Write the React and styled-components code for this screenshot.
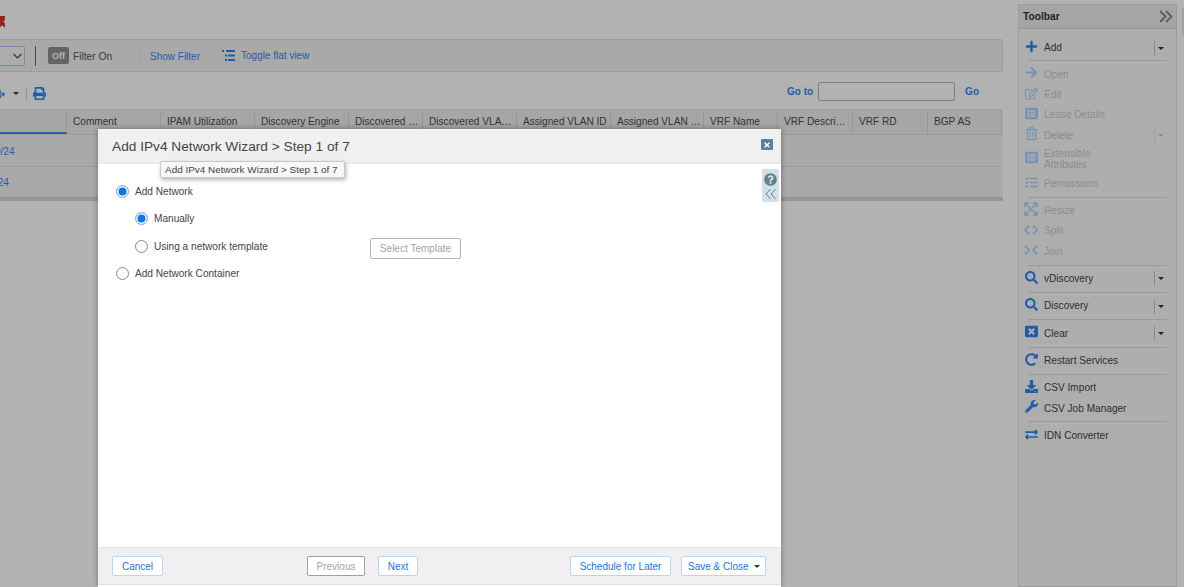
import React from 'react';
import styled, { createGlobalStyle } from 'styled-components';
import {
  FaPlus, FaArrowRight, FaRegEdit, FaListAlt, FaRegTrashAlt, FaTasks,
  FaSearch, FaWindowClose, FaRedoAlt, FaDownload, FaWrench, FaExchangeAlt, FaPrint,
  FaQuestionCircle, FaTimes, FaFileExport,
} from 'react-icons/fa';

const LINK = '#2f86f0';

const Global = createGlobalStyle`
  html, body { margin: 0; padding: 0; background: #fff; }
  #root { width: 1184px; height: 587px; overflow: hidden; }
  * { box-sizing: border-box; }
`;

const Page = styled.div`
  position: relative;
  width: 1184px;
  height: 587px;
  overflow: hidden;
  display: flex;
  background: #ffffff;
  font-family: "Liberation Sans", Arial, sans-serif;
  color: #444;
`;
const Main = styled.main`
  width: 1018px;
  flex: none;
  display: flex;
  flex-direction: column;
`;
const TopBar = styled.div`
  height: 39px;
  display: flex;
  align-items: flex-start;
  padding-top: 16px;
`;
const FilterBar = styled.div`
  width: 1003px;
  height: 33px;
  background: #f3f3f3;
  border: 1px solid #e0e0e0;
  border-left: 0;
  border-radius: 0 3px 3px 0;
  display: flex;
  align-items: center;
`;
const ClippedSelect = styled.div`
  width: 25px;
  height: 20px;
  background: #f8f8f8;
  border: 1px solid #a9c8ee;
  border-left: 0;
  border-radius: 0 2px 2px 0;
  display: flex;
  align-items: center;
  justify-content: flex-end;
  padding-right: 2px;
  color: #444;
`;
const VRule = styled.span`
  width: 1px;
  height: ${p => p.$h}px;
  background: ${p => p.$c};
  margin: 0 ${p => p.$r}px 0 ${p => p.$l}px;
  flex: none;
`;
const OffBadge = styled.span`
  width: 21px;
  height: 17px;
  background: #909090;
  color: #ffffff;
  border-radius: 2px;
  font-size: 9px;
  font-weight: 700;
  display: flex;
  align-items: center;
  justify-content: center;
`;
const FilterLabel = styled.span`
  font-size: 10.2px;
  color: #555;
  margin: 1px 0 0 4px;
  width: 67px;
`;
const BlueLink = styled.a`
  font-size: 10px;
  color: ${LINK};
  display: inline-flex;
  align-items: center;
  gap: 6px;
  font-weight: ${p => (p.$bold ? 700 : 400)};
`;
const FilterLink = styled(BlueLink)`
  margin-top: 1px;
`;
const FlatLink = styled(BlueLink)`
  margin-left: 22px;
  margin-top: -1px;
`;
const ActionRow = styled.div`
  height: 37px;
  width: 1003px;
  padding-top: 5px;
  display: flex;
  align-items: center;
  color: ${LINK};
`;
const Caret = styled.span`
  width: 0;
  height: 0;
  flex: none;
  border-left: 3px solid transparent;
  border-right: 3px solid transparent;
  border-top: 3.5px solid ${p => p.$c || '#333'};
`;
const ExportGap = styled.span`
  width: 8px;
  flex: none;
`;
const ExportIcon = styled(FaFileExport)`
  margin-left: -7px;
  flex: none;
`;
const GoGroup = styled.div`
  margin-left: auto;
  padding-right: 24px;
  display: flex;
  align-items: center;
  margin-top: -3px;
`;
const GoInput = styled.input`
  width: 137px;
  height: 19px;
  margin: 0 10px 0 5px;
  background: #fff;
  border: 1px solid #b4b4b4;
  border-radius: 2px;
  padding: 0;
`;
const Table = styled.div`
  width: 1003px;
  display: flex;
  flex-direction: column;
`;
const HeadRow = styled.div`
  height: 25px;
  display: flex;
  background: #eeeeee;
  border-top: 1px solid #e6e6e6;
`;
const HeadCell = styled.div`
  flex: none;
  width: ${p => p.$w}px;
  height: 100%;
  border-right: 1px solid #d8d8d8;
  border-bottom: ${p => (p.$active ? `2px solid ${LINK}` : '0')};
  padding: 6px 0 0 6px;
  font-size: 10.1px;
  color: #4a4a4a;
  white-space: nowrap;
  overflow: hidden;
`;
const BodyRow = styled.div`
  height: 31.5px;
  padding-top: 2px;
  background: #f3f3f3;
  border-top: 1px solid #dfdfdf;
  display: flex;
  align-items: center;
  font-size: 10px;
  color: ${LINK};
`;
const RowLink = styled.a`
  margin-left: -5px;
`;
const ScrollLine = styled.div`
  height: 4px;
  background: #d6d6d6;
`;
const ToolPanel = styled.aside`
  width: 159px;
  margin-top: 4px;
  background: #fafafa;
  border: 1px solid #e0e0e0;
  display: flex;
  flex-direction: column;
  flex: none;
`;
const ToolHead = styled.div`
  height: 24px;
  flex: none;
  background: #ececec;
  border-bottom: 1px solid #dcdcdc;
  display: flex;
  align-items: center;
  justify-content: space-between;
  padding: 0 3px 0 4px;
  font-size: 10.2px;
  font-weight: 700;
  color: #333;
`;
const ToolSection = styled.div`
  margin: 0 9px;
  padding: ${p => (p.$first ? '9px 0 2px' : '3px 0')};
  border-bottom: ${p => (p.$last ? 0 : '1px solid #dcdcdc')};
`;
const ToolRow = styled.div`
  min-height: ${p => (p.$tall ? 28 : 20.3)}px;
  margin: 0 -3px 0 -4px;
  display: flex;
  align-items: center;
  font-size: 10.1px;
  line-height: 11.5px;
  color: ${p => (p.$off ? '#c9c9c9' : '#444')};
`;
const ToolIcon = styled.span`
  width: 14px;
  flex: none;
  margin-right: 6px;
  display: flex;
  justify-content: center;
  color: ${p => (p.$off ? '#aed0ff' : LINK)};
  margin-top: -3px;
  font-size: 13px;
`;
const ToolText = styled.span`
  flex: 1;
`;
const Split = styled.span`
  width: 13px;
  height: 15px;
  border-left: 1px solid ${p => (p.$off ? '#e4e4e4' : '#c8c8c8')};
  flex: none;
  display: flex;
  align-items: center;
  padding-left: 3px;
  margin-right: 3px;
`;
const ScrollStub = styled.div`
  width: 2px;
  height: 28px;
  margin: 8px 0 0 5px;
  background: #e8e8e8;
  flex: none;
`;
const Overlay = styled.div`
  position: absolute;
  inset: 0;
  background: rgba(0, 0, 0, 0.3);
`;
const Modal = styled.section`
  position: absolute;
  left: 98px;
  top: 129px;
  width: 683px;
  height: 458px;
  background: #fff;
  display: flex;
  flex-direction: column;
  box-shadow: 0 0 6px rgba(0, 0, 0, 0.35);
`;
const ModalHead = styled.header`
  height: 35px;
  flex: none;
  background: #f0f0f0;
  border-bottom: 1px solid #e6e6e6;
  display: flex;
  align-items: center;
  justify-content: space-between;
  padding: 0 8px 0 14px;
  font-size: 13.7px;
  color: #444;
`;
const CloseBtn = styled.span`
  width: 12px;
  height: 11px;
  background: #5f7f93;
  color: #fff;
  border-radius: 1px;
  font-size: 8px;
  display: flex;
  align-items: center;
  justify-content: center;
  margin-top: -3px;
`;
const Tip = styled.div`
  position: absolute;
  left: 62px;
  top: 32px;
  width: 185px;
  height: 17px;
  padding: 0 4px;
  background: #f7f7f7;
  border: 1px solid #c8c8c8;
  border-radius: 2px;
  box-shadow: 1px 2px 4px rgba(0, 0, 0, 0.3);
  font-size: 9.95px;
  line-height: 15px;
  color: #444;
  white-space: nowrap;
`;
const SideTab = styled.div`
  position: absolute;
  right: 2px;
  top: 40px;
  width: 17px;
  height: 33px;
  background: #d3e0e5;
  border-radius: 2px;
  display: flex;
  flex-direction: column;
  align-items: center;
  justify-content: space-around;
  color: #5f7f93;
  padding: 3px 0 1px;
`;
const ModalBody = styled.div`
  flex: 1;
  padding: 20px 18px 0;
  display: flex;
  flex-direction: column;
  gap: 13.5px;
`;
const RadioLine = styled.label`
  height: 14px;
  display: flex;
  align-items: center;
  font-size: 10.1px;
  color: #444;
  margin-left: ${p => (p.$nested ? 19 : 0)}px;
`;
const Radio = styled.input.attrs({ type: 'radio' })`
  appearance: none;
  width: 13px;
  height: 13px;
  margin: 0 6px 0 0;
  flex: none;
  border-radius: 50%;
  background: #fff;
  border: 1px solid ${p => (p.checked ? '#6aa9f5' : '#8a8a8a')};
  box-shadow: ${p => (p.checked ? 'inset 0 0 0 1.5px #fff, inset 0 0 0 7px #0f72ee' : 'none')};
`;
const RadioText = styled.span`
  width: ${p => p.$w || 'auto'};
`;
const GhostBtn = styled.button`
  width: 91px;
  height: 21px;
  margin-top: 4px;
  background: #fff;
  border: 1px solid #b4b4b4;
  border-radius: 2px;
  font: 10.05px "Liberation Sans", Arial, sans-serif;
  color: #a3a3a3;
  padding: 0;
`;
const ModalFoot = styled.footer`
  height: 38px;
  flex: none;
  background: #f0f0f0;
  border-top: 1px solid #e6e6e6;
  border-bottom: 1px solid #e0e0e0;
  display: flex;
  align-items: center;
  justify-content: space-between;
  padding: 0 15px 0 14px;
  margin-bottom: 2px;
`;
const BtnGroup = styled.div`
  display: flex;
  gap: ${p => p.$gap}px;
  margin-right: ${p => p.$mr || 0}px;
`;
const FootBtn = styled.button`
  width: ${p => p.$w}px;
  height: 20px;
  background: #fff;
  border: 1px solid ${p => (p.disabled ? '#a0a0a0' : '#b7d5fb')};
  border-radius: 2px;
  font: 10px "Liberation Sans", Arial, sans-serif;
  color: ${p => (p.disabled ? '#a3a3a3' : '#1a75e8')};
  padding: ${p => (p.$caret ? '0 5px 0 6px' : 0)};
  display: flex;
  align-items: center;
  justify-content: ${p => (p.$caret ? 'space-between' : 'center')};
`;

const columns = [
  ['', 67, true], ['Comment', 94], ['IPAM Utilization', 94], ['Discovery Engine', 94],
  ['Discovered …', 74], ['Discovered VLA…', 94], ['Assigned VLAN ID', 94], ['Assigned VLAN …', 93],
  ['VRF Name', 74], ['VRF Descri…', 75], ['VRF RD', 75], ['BGP AS', 74],
];

const Stroke = ({ d, w = 14, h = 12, sw = 1.8, c = 'currentColor' }) => (
  <svg width={w} height={h} viewBox={`0 0 ${w} ${h}`} fill="none" stroke={c} strokeWidth={sw}>
    <path d={d} />
  </svg>
);
const JoinIcon = () => <Stroke d="M1 1.500l4 4.500-4 4.500M13 1.500L9 6l4 4.500" />;
const SplitIcon = () => <Stroke d="M5 1.500L1 6l4 4.500M9 1.500l4 4.500-4 4.500" />;
const ResizeIcon = () => (
  <svg width="14" height="14" viewBox="0 0 14 14" fill="none" stroke="currentColor" strokeWidth="1.5">
    <path d="M1 5V1h4M9 1h4v4M13 9v4H9M5 13H1V9M2 2l10 10M12 2L2 12" />
  </svg>
);

const groups = [
  [{ t: 'Add', i: <FaPlus />, drop: true }],
  [
    { t: 'Open', i: <FaArrowRight />, off: true },
    { t: 'Edit', i: <FaRegEdit />, off: true },
    { t: 'Lease Details', i: <FaListAlt />, off: true },
    { t: 'Delete', i: <FaRegTrashAlt />, off: true, drop: true },
    { t: <>Extensible<br />Attributes</>, i: <FaListAlt />, off: true, tall: true },
    { t: 'Permissions', i: <FaTasks />, off: true },
  ],
  [
    { t: 'Resize', i: <ResizeIcon />, off: true },
    { t: 'Split', i: <SplitIcon />, off: true },
    { t: 'Join', i: <JoinIcon />, off: true },
  ],
  [{ t: 'vDiscovery', i: <FaSearch />, drop: true }],
  [{ t: 'Discovery', i: <FaSearch />, drop: true }],
  [{ t: 'Clear', i: <FaWindowClose />, drop: true }],
  [{ t: 'Restart Services', i: <FaRedoAlt /> }],
  [{ t: 'CSV Import', i: <FaDownload /> }, { t: 'CSV Job Manager', i: <FaWrench /> }],
  [{ t: 'IDN Converter', i: <FaExchangeAlt /> }],
];

export default function App() {
  return (
    <Page>
      <Global />
      <Main>
        <TopBar>
          <svg width="5" height="12" viewBox="0 0 5 12"><path d="M0 0h5v4L3.500 5.500 5 7.500V12L2.500 9.500 0 11z" fill="#d8323a" /></svg>
        </TopBar>
        <FilterBar>
          <ClippedSelect><Stroke d="M.5 1l4 4 4-4" w={9} h={6} sw={1.1} /></ClippedSelect>
          <VRule $h={20} $c="#666" $l={10} $r={12} />
          <OffBadge>Off</OffBadge>
          <FilterLabel>Filter On</FilterLabel>
          <VRule $h={16} $c="#e2e2e2" $l={0} $r={9} />
          <FilterLink>Show Filter</FilterLink>
          <FlatLink>
            <svg width="13" height="11" viewBox="0 0 13 11" fill="currentColor">
              <path d="M0 0h2v2H0zM4 0h9v2H4zM3 4.500h2v2H3zM6 4.500h7v2H6zM3 9h2v2H3zM6 9h7v2H6z" />
            </svg>
            Toggle flat view
          </FlatLink>
        </FilterBar>
        <ActionRow>
          <ExportIcon size={12} />
          <ExportGap />
          <Caret />
          <VRule $h={13} $c="#d0d0d0" $l={7} $r={6} />
          <FaPrint size={13} />
          <GoGroup>
            <BlueLink $bold>Go to</BlueLink>
            <GoInput />
            <BlueLink $bold>Go</BlueLink>
          </GoGroup>
        </ActionRow>
        <Table>
          <HeadRow>
            {columns.map(([t, w, a], i) => <HeadCell key={i} $w={w} $active={a}>{t}</HeadCell>)}
          </HeadRow>
          <BodyRow><RowLink>0/24</RowLink></BodyRow>
          <BodyRow><RowLink>/24</RowLink></BodyRow>
          <ScrollLine />
        </Table>
      </Main>
      <ToolPanel>
        <ToolHead>
          Toolbar
          <Stroke d="M1 1l5.500 5.500L1 12M7 1l5.500 5.500L7 12" w={14} h={13} sw={1.8} c="#6c8ea3" />
        </ToolHead>
        {groups.map((g, i) => (
          <ToolSection key={i} $first={i === 0} $last={i === groups.length - 1}>
            {g.map((r, j) => (
              <ToolRow key={j} $off={r.off} $tall={r.tall}>
                <ToolIcon $off={r.off}>{r.i}</ToolIcon>
                <ToolText>{r.t}</ToolText>
                {r.drop && <Split $off={r.off}><Caret $c={r.off ? '#c9c9c9' : '#333'} /></Split>}
              </ToolRow>
            ))}
          </ToolSection>
        ))}
      </ToolPanel>
      <ScrollStub />
      <Overlay />
      <Modal>
        <ModalHead>
          Add IPv4 Network Wizard &gt; Step 1 of 7
          <CloseBtn><FaTimes /></CloseBtn>
        </ModalHead>
        <Tip>Add IPv4 Network Wizard &gt; Step 1 of 7</Tip>
        <SideTab>
          <FaQuestionCircle size={13} />
          <Stroke d="M5.500 1L1 6l4.500 5M10.500 1L6 6l4.500 5" w={12} h={12} sw={1} />
        </SideTab>
        <ModalBody>
          <RadioLine><Radio checked readOnly />Add Network</RadioLine>
          <RadioLine $nested><Radio checked readOnly />Manually</RadioLine>
          <RadioLine $nested>
            <Radio readOnly />
            <RadioText $w="216px">Using a network template</RadioText>
            <GhostBtn>Select Template</GhostBtn>
          </RadioLine>
          <RadioLine><Radio readOnly />Add Network Container</RadioLine>
        </ModalBody>
        <ModalFoot>
          <BtnGroup $gap={0}><FootBtn $w={51}>Cancel</FootBtn></BtnGroup>
          <BtnGroup $gap={13} $mr={8}>
            <FootBtn $w={58} disabled>Previous</FootBtn>
            <FootBtn $w={40}>Next</FootBtn>
          </BtnGroup>
          <BtnGroup $gap={10}>
            <FootBtn $w={101}>Schedule for Later</FootBtn>
            <FootBtn $w={85} $caret>Save &amp; Close<Caret /></FootBtn>
          </BtnGroup>
        </ModalFoot>
      </Modal>
    </Page>
  );
}
